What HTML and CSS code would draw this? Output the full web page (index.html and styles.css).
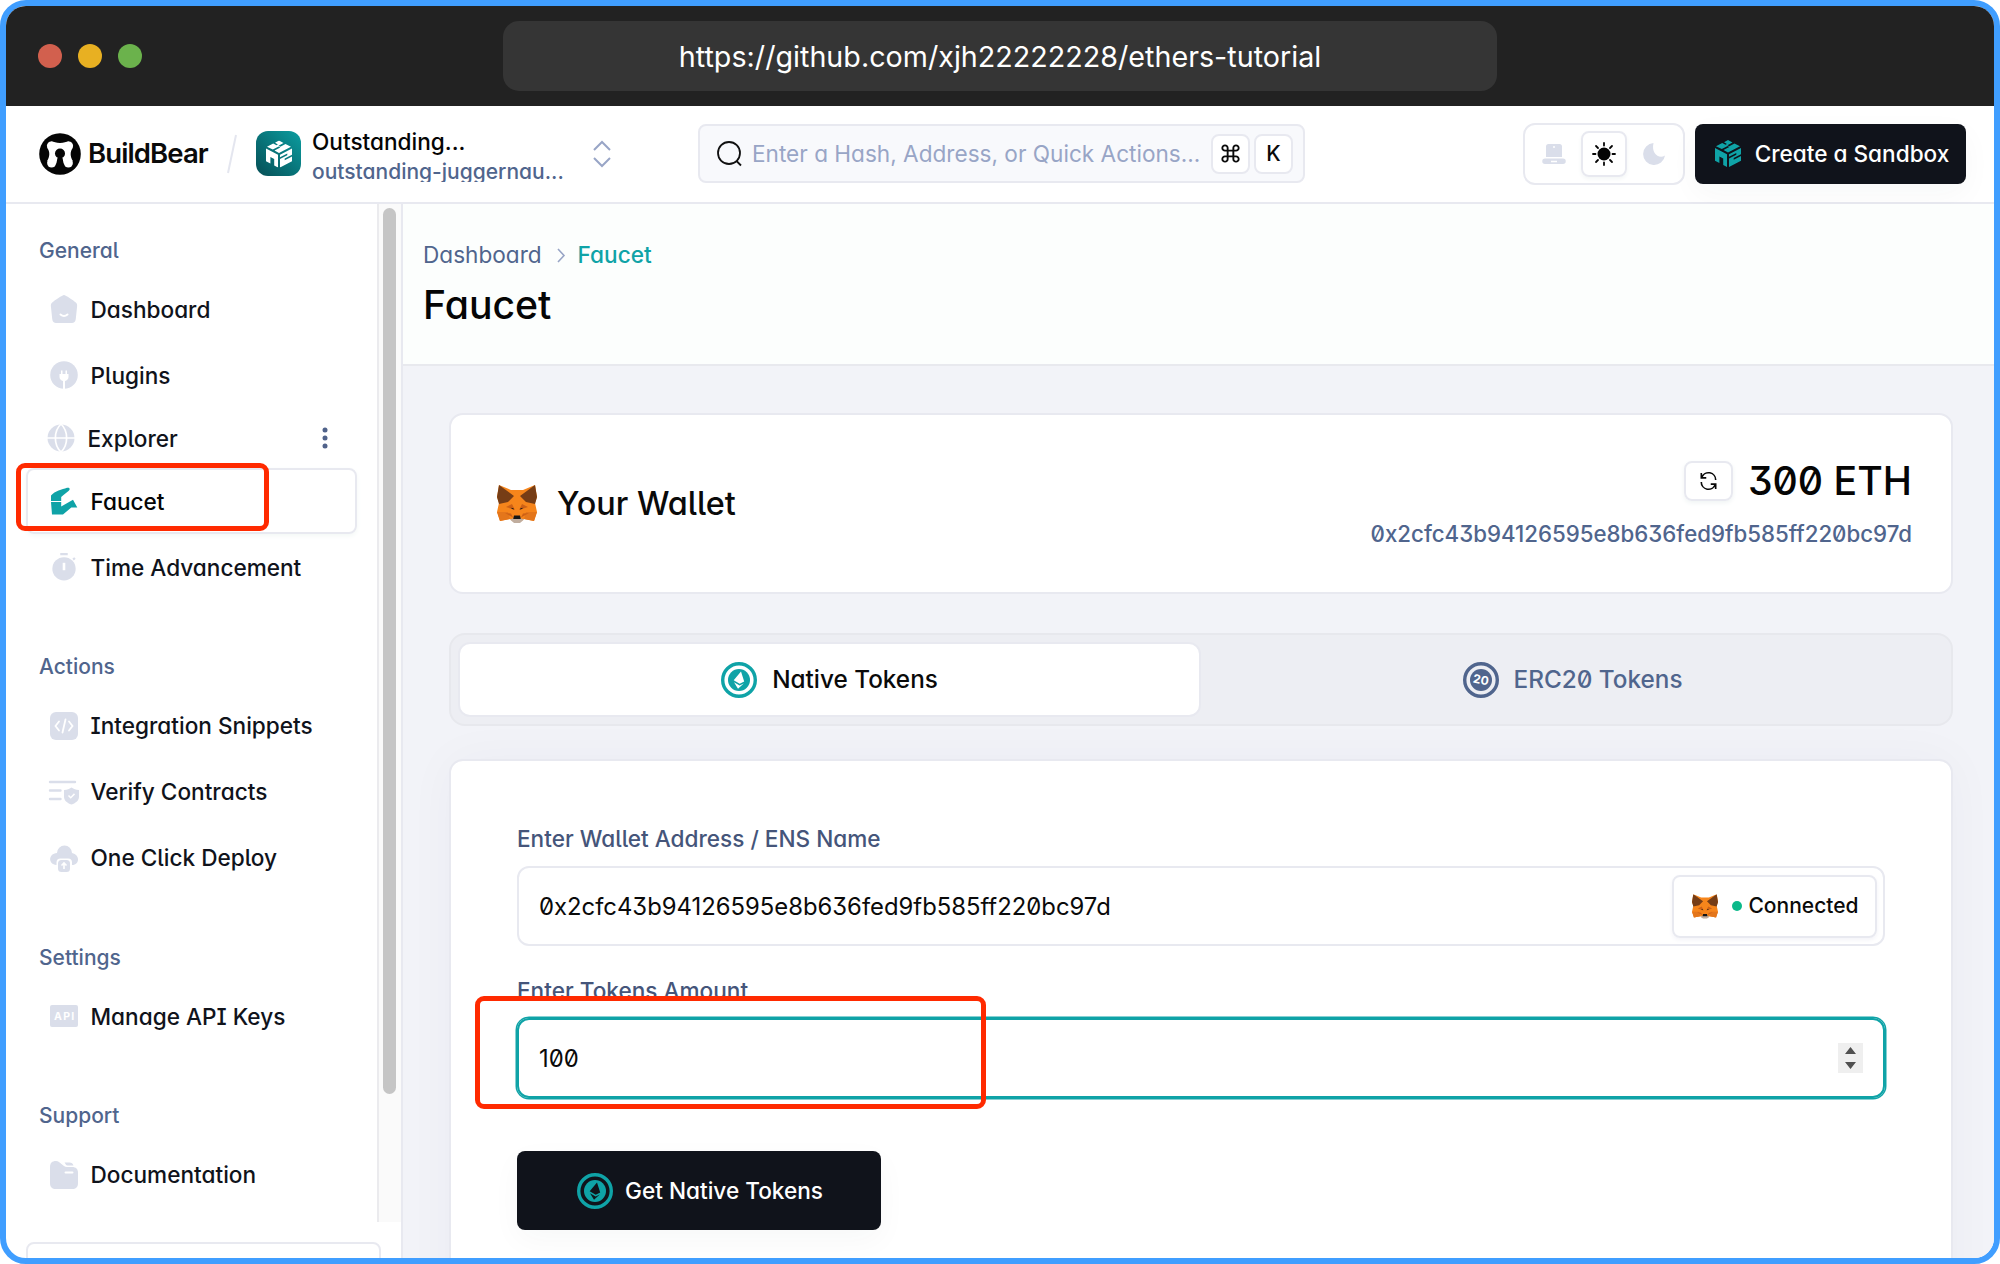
FILE: index.html
```html
<!DOCTYPE html>
<html lang="en">
<head>
<meta charset="utf-8">
<title>Faucet - BuildBear</title>
<link rel="stylesheet" href="styles.css">
</head>
<body>
<svg class="defs" width="0" height="0" aria-hidden="true">
  <symbol id="fox" viewBox="0 0 40 38">
    <path fill="#f6851b" d="M2 0l12 5h12l12-5 2 12-2 6 2 9-3 9-10-2-3 2.500H16L13 34 3 36 0 27l2-9-2-6z"/>
    <path fill="#763d16" d="M2 0l15 11-6 6-9 2L0 12zM38 0L23 11l6 6 9 2 2-7z"/>
    <path fill="#e4761b" d="M0 27h11l2 7-10 2zM40 27H29l-2 7 10 2z"/>
    <path fill="#cd6116" d="M9 22l6-3 3 6zM31 22l-6-3-3 6zM8 28l6 .5 2 4zM32 28l-6 .5-2 4z"/>
    <path fill="#c0ad9e" d="M13 34.500l4-1.500h6l4 1.500-4 3.500h-6z"/>
    <path fill="#161616" d="M17 30.500h6l.8 3.500h-7.600zM13.500 22.800l3 .4.200 1.600zM26.500 22.800l-3 .4-.2 1.600z"/>
  </symbol>
  <symbol id="cube" viewBox="0 0 26 27">
    <path fill="currentColor" d="M13 0l4.500 2.500-5 2.700 1.800 1 5.200-2.700L25 6.200l-12 6.300L8.500 10l5.800-2.900-1.600-1L6.800 9 1 6.200l6.200-3.100 3.300 1.700 1.400-.8L9 2.200z"/>
    <path fill="currentColor" d="M0 8l12 6.300V27l-3.800-2v-6.500l-3.800-2.100v6.500L0 20.700z"/>
    <path fill="currentColor" d="M14 14.300L26 8v6.200l-7.300 3.900v1.700l7.300-3.800v4.700L14 27v-8.400l7.300-3.900V13L14 16.800z"/>
  </symbol>
  <symbol id="coin" viewBox="0 0 36 36">
    <circle cx="18" cy="18" r="16.300" fill="none" stroke="currentColor" stroke-width="3.400"/>
    <circle cx="18" cy="18" r="11" fill="currentColor"/>
    <path class="coin-gem" d="M20 9.500l3.200 10-4.500 2.200-6-3.400zM13 20.300l5.600 3.100 4.200-1.900-5.800 5.200z"/>
  </symbol>
</svg>

<div class="window">
  <div class="titlebar">
    <div class="lights"><i class="red"></i><i class="yellow"></i><i class="green"></i></div>
    <div class="url">https://github.com/xjh22222228/ethers-tutorial</div>
  </div>

  <header class="topbar">
    <svg class="bear" viewBox="0 0 42 42"><circle cx="21" cy="21" r="20.800" fill="#050505"/>
      <g fill="#fff"><circle cx="12.200" cy="12.700" r="4.300"/><circle cx="29.800" cy="12.700" r="4.300"/><circle cx="12.600" cy="30" r="4.500"/><circle cx="29.400" cy="30" r="4.500"/>
      <path d="M12 8.400c3 0 5 1.600 9 1.600s6-1.600 9-1.600l3.600 6.600c-2.600 4-2.600 8 .2 13L25 31c-1-2-1-4.500-1.500-6h-5c-.5 1.500-.5 4-1.500 6l-8.800-3c2.800-5 2.800-9 .2-13z"/></g>
      <circle cx="21" cy="20.500" r="5" fill="#050505"/><path fill="#050505" d="M19 23h4v5l2 6v4h-8v-4l2-6z"/></svg>
    <span class="brand">BuildBear</span>
    <svg class="slash" viewBox="0 0 10 40"><path d="M9 1L1 39" stroke="#e4e6ef" stroke-width="2"/></svg>
    <span class="badge"><svg viewBox="0 0 26 27"><use href="#cube"/></svg></span>
    <div class="project"><div class="project-name">Outstanding...</div><div class="project-id">outstanding-juggernau...</div></div>
    <svg class="updown" viewBox="0 0 18 26" fill="none" stroke="#98a5c6" stroke-width="2"><path d="M1 9l8-8 8 8M1 17l8 8 8-8"/></svg>
    <div class="search">
      <svg class="lens" viewBox="0 0 26 26" fill="none" stroke="#111" stroke-width="1.800"><circle cx="12" cy="12" r="11"/><path d="M19.500 20l4.500 4.500"/></svg>
      <span class="hint">Enter a Hash, Address, or Quick Actions...</span>
      <kbd><svg class="cmd" viewBox="0 0 20 20" fill="none" stroke="#0a0a0a" stroke-width="2"><path d="M7 7h6v6H7zM7 7H4.300A2.800 2.800 0 1 1 7 4.300zM13 7V4.300A2.800 2.800 0 1 1 15.700 7zM13 13h2.700A2.800 2.800 0 1 1 13 15.700zM7 13v2.700A2.800 2.800 0 1 1 4.300 13z"/></svg></kbd>
      <kbd>K</kbd>
    </div>
    <div class="themes">
      <span class="theme"><svg viewBox="0 0 24 24"><path fill="#dadeea" d="M6.500 2h11A2.500 2.500 0 0 1 20 4.500V15H4V4.500A2.500 2.500 0 0 1 6.500 2zM3 16.500h18a2.500 2.500 0 0 1 0 5.500H3a2.500 2.500 0 0 1 0-5.500z"/><circle cx="12" cy="5" r="1" fill="#fff"/><path stroke="#fff" stroke-width="1.600" d="M9 19.500h6"/></svg></span>
      <span class="theme current"><svg viewBox="0 0 24 24"><circle cx="12" cy="12" r="6.500" fill="#050505"/><path stroke="#050505" stroke-width="1.800" stroke-linecap="round" d="M12 1v2.500M12 20.500V23M1 12h2.500M20.500 12H23M4 4l2 2M18 18l2 2M20 4l-2 2M6 18l-2 2"/></svg></span>
      <span class="theme"><svg viewBox="0 0 24 24"><path fill="#dadeea" d="M11.500 1A11 11 0 1 0 23 13.500c-6 4-14-2-11.500-12.500z"/></svg></span>
    </div>
    <button class="dark create"><svg viewBox="0 0 26 27"><use href="#cube"/></svg>Create a Sandbox</button>
  </header>

  <div class="body">
    <aside class="side">
      <nav class="nav">
        <h2>General</h2>
        <a class="item"><svg viewBox="0 0 28 28"><path fill="#dadeea" d="M14 0c1.500 0 9.500 5.500 11.500 7.200 1.800 1.600 1.800 2.600 1.500 5l-1.200 11.500c-.4 3-1.500 4.300-4.800 4.300H7c-3.300 0-4.400-1.300-4.800-4.300L1 12.200c-.3-2.400-.3-3.400 1.500-5C4.500 5.500 12.500 0 14 0z"/><path d="M10.500 19.500c2 1.700 5 1.700 7 0" fill="none" stroke="#fff" stroke-width="2" stroke-linecap="round"/></svg>Dashboard</a>
        <a class="item"><svg viewBox="0 0 28 28"><circle cx="14" cy="14" r="13.800" fill="#dadeea"/><path fill="#fff" d="M11 9.500h1.500V13h3V9.500H17V13h1.500v3c0 2-1.500 3.500-3.500 4v8h-2v-8c-2-.5-3.500-2-3.500-4v-3H11z"/></svg>Plugins</a>
        <a class="item explorer"><svg viewBox="0 0 28 28"><circle cx="14" cy="14" r="13.500" fill="#dadeea"/><path fill="none" stroke="#fff" stroke-width="1.700" d="M0 14h28M14 0c-7.500 7-7.500 21 0 28M14 0c7.500 7 7.500 21 0 28"/></svg>Explorer
          <svg class="more" viewBox="0 0 6 22" fill="#50628a"><circle cx="3" cy="3" r="2.500"/><circle cx="3" cy="11" r="2.500"/><circle cx="3" cy="19" r="2.500"/></svg></a>
        <a class="item active"><svg viewBox="0 0 28 28"><path fill="#0fa3a7" d="M1 8.500C5 4 12 2.500 17 .8c3-.8 3.500 1.800 1.500 3.200L13.500 8l-2.300 2v4H1zM1 15h10.200v4.500L23 12.700l4.300 7.800h-6L13 27.500H2z"/></svg>Faucet<span class="mark mark-nav"></span></a>
        <a class="item"><svg viewBox="0 0 28 30"><path fill="#dadeea" d="M10 0h8v2.500h-8zM23 6l2-1.500 1.500 1.700L24.500 8z"/><circle cx="14" cy="17" r="12.500" fill="#dadeea"/><path stroke="#fff" stroke-width="2.800" d="M14 10.500v8"/></svg>Time Advancement</a>
        <h2>Actions</h2>
        <a class="item"><svg viewBox="0 0 28 28"><rect width="28" height="28" rx="6" fill="#dadeea"/><path fill="none" stroke="#fff" stroke-width="1.800" stroke-linecap="round" d="M9 9.500L5.500 14 9 18.500M19 9.500l3.500 4.500-3.500 4.500M15.500 7.500l-3 13"/></svg>Integration Snippets</a>
        <a class="item"><svg class="wide" viewBox="0 0 30 26"><path fill="none" stroke="#dadeea" stroke-width="2.400" stroke-linecap="round" d="M1 3h25M1 11.500h10.500M1 20h10.500"/><path fill="#dadeea" d="M22.500 8.500c2.500 1.500 4 2.200 7.500 2.500v6.500c0 4-3 6.500-7.500 8-4.500-1.500-7.500-4-7.500-8V11c3.500-.3 5-1 7.500-2.500z"/><path fill="none" stroke="#fff" stroke-width="1.500" d="M19.500 16.500l2.200 2.200 3.800-3.800"/></svg>Verify Contracts</a>
        <a class="item"><svg viewBox="0 0 28 28"><path fill="#dadeea" d="M7 9a7.500 7.500 0 1 1 15 0c8 1.500 8 12 0 12v-2.500a4 4 0 0 0-4-4h-7.500a4 4 0 0 0-4 4V21C-2 20.500-2 9.500 7 9z"/><rect x="8" y="16" width="12" height="12" rx="3.500" fill="#dadeea"/><path fill="none" stroke="#fff" stroke-width="1.600" d="M14 25v-5.500M11.500 21.500L14 19l2.500 2.500"/></svg>One Click Deploy</a>
        <h2>Settings</h2>
        <a class="item"><svg viewBox="0 0 28 28"><rect y="3" width="28" height="22" rx="2" fill="#dadeea"/><text x="14.700" y="18" text-anchor="middle" class="api">API</text></svg>Manage API Keys</a>
        <h2>Support</h2>
        <a class="item"><svg viewBox="0 0 28 28"><path fill="#dadeea" d="M0 6C0 2 2 0 6 0c4.500 0 6.500 6 11 6h5c4 0 6 2 6 6v10c0 4-2 6-6 6H6c-4 0-6-2-6-6zM14.500 1.500h5c2 0 3.500 1 4 3h-6c-1.500 0-2-1.500-3-3z"/><path stroke="#fff" stroke-width="2" stroke-linecap="round" d="M15.500 11.500h7"/></svg>Documentation</a>
      </nav>
      <div class="track"><div class="thumb"></div></div>
      <div class="foot"><div class="account"></div></div>
    </aside>

    <main class="main">
      <div class="heading">
        <div class="crumbs"><span>Dashboard</span><svg viewBox="0 0 8 15" fill="none" stroke="#98a5c6" stroke-width="1.600"><path d="M1 1l6 6.500L1 14"/></svg><span class="here">Faucet</span></div>
        <h1>Faucet</h1>
      </div>
      <div class="content">
        <section class="wallet">
          <svg class="fox" viewBox="0 0 40 38"><use href="#fox"/></svg>
          <h3>Your Wallet</h3>
          <div class="funds">
            <div class="balance"><span class="refresh"><svg viewBox="0 0 18 20" fill="none" stroke="#0a0a0a" stroke-width="1.800"><path d="M1 1v5.500h5.500M1.500 6A8 8 0 0 1 17 9M17 19v-5.500h-5.500M16.500 14A8 8 0 0 1 1 11"/></svg></span>300 ETH</div>
            <div class="address">0x2cfc43b94126595e8b636fed9fb585ff220bc97d</div>
          </div>
        </section>
        <div class="tabs">
          <div class="tab on"><svg viewBox="0 0 36 36"><use href="#coin"/></svg>Native Tokens</div>
          <div class="tab"><svg viewBox="0 0 36 36"><circle cx="18" cy="18" r="16.300" fill="none" stroke="#50658d" stroke-width="3.400"/><circle cx="18" cy="18" r="11" fill="#50658d"/><text x="18" y="22" text-anchor="middle" transform="rotate(10 18 18)" class="twenty">20</text></svg>ERC20 Tokens</div>
        </div>
        <section class="form">
          <label>Enter Wallet Address / ENS Name</label>
          <div class="field"><span class="value">0x2cfc43b94126595e8b636fed9fb585ff220bc97d</span>
            <span class="connected"><svg viewBox="0 0 40 38"><use href="#fox"/></svg><i></i>Connected</span></div>
          <label>Enter Tokens Amount</label>
          <div class="field focus"><span class="value">100</span>
            <svg class="spin" viewBox="0 0 25 30"><path fill="#efefef" d="M0 0h25v30H0z"/><path fill="#505050" d="M7 11l5.500-7 5.500 7zM7 19l5.500 7 5.500-7z"/></svg>
            <span class="mark mark-amount"></span></div>
          <button class="dark get"><svg viewBox="0 0 36 36"><use href="#coin"/></svg>Get Native Tokens</button>
        </section>
      </div>
    </main>
  </div>
</div>
</body>
</html>
```
FILE: styles.css
```css
* { box-sizing: border-box; }
body {
  margin: 0;
  background: #fff;
  color: #0a0a0a;
  font: 500 22.6px/1.2 Inter, sans-serif;
  font-feature-settings: "zero", "cv05", "cv08", "cv09", "cv11";
}
svg { display: block; flex: none; overflow: visible; }
.defs { position: absolute; }
h1, h2, h3 { margin: 0; font-weight: 500; }
button { font: inherit; font-feature-settings: inherit; border: 0; }

.window {
  width: 2000px;
  height: 1264px;
  border: 6px solid #409eff;
  border-radius: 26px;
  overflow: hidden;
  display: flex;
  flex-direction: column;
}

/* browser chrome */
.titlebar {
  height: 100px;
  flex: none;
  background: #222;
  display: grid;
  grid-template-columns: 1fr 994px 1fr;
  align-items: center;
}
.lights { display: flex; gap: 16px; padding-left: 32px; }
.lights i { width: 24px; height: 24px; border-radius: 50%; }
.red { background: #d2604e; }
.yellow { background: #e8b022; }
.green { background: #6bb24c; }
.url {
  height: 70px;
  border-radius: 16px;
  background: #353535;
  color: #fff;
  font: 400 28.7px/71px Inter, sans-serif;
  font-feature-settings: normal;
  text-align: center;
}

/* app header */
.topbar {
  height: 98px;
  flex: none;
  border-bottom: 2px solid #e8e9f0;
  background: #fff;
  display: flex;
  align-items: center;
  padding: 1px 28px 2px 33px;
}
.bear { width: 42px; height: 42px; }
.brand {
  width: 122px;
  margin-left: 7px;
  font-size: 27.5px;
  font-weight: 600;
  letter-spacing: -.9px;
  font-feature-settings: normal;
}
.slash { width: 10px; height: 40px; margin-left: 17px; }
.badge {
  width: 45px;
  height: 45px;
  margin-left: 19px;
  border-radius: 12px;
  background: linear-gradient(45deg, #064e55, #0b9da0);
  color: #fff;
  display: grid;
  place-items: center;
}
.badge svg { width: 26px; height: 28px; }
.project { width: 271px; margin-left: 11px; height: 54px; margin-top: 3px; overflow: hidden; }
.project-name { line-height: 28px; color: #050505; }
.project-id { font-size: 21px; line-height: 31px; color: #50658d; }
.updown { width: 18px; height: 26px; margin-left: 10px; }
.search {
  width: 607px;
  height: 59px;
  margin-left: 87px;
  padding: 0 10px 0 17px;
  border: 2px solid #e8e9f0;
  border-radius: 8px;
  background: #f8f9fc;
  display: flex;
  align-items: center;
  gap: 4px;
}
.lens { width: 26px; height: 26px; }
.hint { flex: 1; margin-left: 5px; color: #98a5c6; font-weight: 400; white-space: nowrap; }
kbd {
  width: 39px;
  height: 40px;
  border: 2px solid #e8e9f0;
  border-radius: 8px;
  background: #fff;
  font: inherit;
  font-size: 21px;
  display: grid;
  place-items: center;
}
.cmd { width: 19px; height: 19px; }
.themes {
  width: 162px;
  height: 62px;
  margin-left: auto;
  padding: 6px;
  border: 2px solid #e8e9f0;
  border-radius: 12px;
  display: flex;
  align-items: center;
  gap: 4px;
}
.theme { width: 46px; height: 46px; border: 2px solid transparent; border-radius: 8px; display: grid; place-items: center; }
.theme svg { width: 24px; height: 24px; }
.theme.current { border-color: #e8e9f0; box-shadow: 0 2px 4px #f3f6f6; }
.dark {
  background: #10131b;
  color: #fff;
  border-radius: 8px;
  padding: 0;
  display: flex;
  align-items: center;
  justify-content: center;
  box-shadow: 0 10px 30px rgba(30, 60, 50, .035);
}
.dark svg { color: #0fa3a7; }
.create { width: 271px; height: 60px; margin-left: 10px; padding-left: 3px; gap: 14px; }
.create svg { width: 26px; height: 27px; }

.body { flex: 1; display: flex; min-height: 0; }

/* sidebar */
.side {
  width: 397px;
  flex: none;
  border-right: 2px solid #e8e9f0;
  display: grid;
  grid-template-columns: 371px 24px;
  grid-template-rows: 1018px 1fr;
}
.nav { padding: 30px 20px 0; color: #10131b; }
.nav h2 {
  height: 32px;
  margin: 50px 0 10.4px 13px;
  font-size: 21px;
  line-height: 33px;
  color: #50658d;
}
.nav h2:first-child { margin-top: 0; }
.item {
  position: relative;
  height: 66px;
  width: 331px;
  padding-left: 22px;
  border: 2px solid transparent;
  border-radius: 8px;
  display: flex;
  align-items: center;
  gap: 12.500px;
  white-space: nowrap;
}
.item svg { width: 28px; height: 28px; }
.item svg.wide { width: 30px; height: 26px; margin: 0 -1px; }
.item.explorer { height: 60px; padding-left: 19px; }
.item svg.more { width: 6px; height: 22px; margin-left: auto; margin-right: 27px; }
.item.active { border-color: #e8e9f0; box-shadow: 0 2px 5px #f3f8f6; color: #050505; }
.api { font: 700 10.500px Inter, sans-serif; letter-spacing: 1.200px; fill: #fff; }
.track { background: #fafafa; border-left: 2px solid #ebebee; padding: 4px 0 0 4px; }
.thumb { width: 13px; height: 886px; border-radius: 7px; background: #c5c5c5; }
.foot { grid-column: 1 / 3; padding: 20px 20px 0; overflow: hidden; }
.account { height: 60px; border: 2px solid #e8e9f0; border-radius: 8px; }

/* annotation outlines laid over the page */
.mark { position: absolute; border: 5px solid #ff2a00; border-radius: 9px; z-index: 2; }
.mark-nav { left: -12px; top: -7px; width: 253px; height: 68px; }
.mark-amount { left: -44px; top: -24px; width: 511px; height: 113px; }

/* main column */
.main { flex: 1; display: flex; flex-direction: column; background: #f2f3f8; min-width: 0; }
.heading { height: 162px; flex: none; background: #fcfefd; border-bottom: 2px solid #e8e9ee; padding: 37px 20px 0; }
.crumbs { display: flex; align-items: center; height: 28px; color: #50658d; font-weight: 400; }
.crumbs svg { width: 8px; height: 15px; margin: 0 13px 0 15px; }
.here { color: #0fa3a7; font-weight: 500; }
h1 { font-size: 39.2px; line-height: 48px; margin-top: 12px; color: #050505; }
.content { flex: 1; padding: 47px 41px 0 46px; }
.wallet, .form { background: #fff; border: 2px solid #e8e9f0; border-radius: 14px; }
.wallet { height: 181px; display: flex; align-items: center; padding: 0 39px 0 46px; }
.fox { width: 40px; height: 38px; }
h3 { font-size: 32.4px; margin-left: 20px; margin-top: 1px; color: #0a0a0a; }
.funds { margin-left: auto; text-align: right; margin-top: -2px; }
.balance { display: flex; justify-content: flex-end; align-items: center; font-size: 39.2px; line-height: 50px; color: #050505; }
.refresh {
  width: 49px;
  height: 40px;
  margin-right: 15px;
  border: 2px solid #e8e9f0;
  border-radius: 8px;
  box-shadow: 0 2px 5px #f0f4f4;
  display: grid;
  place-items: center;
}
.refresh svg { width: 17px; height: 18px; }
.address { font-size: 22.25px; line-height: 30px; margin-top: 13px; color: #50658d; }
.tabs {
  height: 93px;
  margin-top: 39px;
  padding: 7px;
  border: 2px solid #e7e8ed;
  border-radius: 16px;
  background: #edeef3;
  display: grid;
  grid-template-columns: 1fr 1fr;
}
.tab {
  display: flex;
  align-items: center;
  justify-content: center;
  gap: 15px;
  font-size: 24.3px;
  color: #50658d;
  border: 2px solid transparent;
  border-radius: 12px;
}
.tab svg { width: 36px; height: 36px; }
.tab.on { background: #fff; border-color: #e8e9f0; color: #0a0a0a; }
.tab.on svg { color: #0fa3a7; }
.coin-gem { fill: var(--gem, #fff); }
.get { --gem: #10131b; }
.twenty { font: 700 12px Inter, sans-serif; fill: #fff; }
.form { height: 560px; margin-top: 33px; padding: 60px 66px; box-shadow: 0 0 50px rgba(30, 40, 80, .035); }
label { display: block; height: 32px; line-height: 35px; color: #45557a; }
.field {
  position: relative;
  height: 80px;
  margin: 13px 0 27px;
  padding: 0 6px 0 20px;
  border: 2px solid #e8e9f0;
  border-radius: 12px;
  display: flex;
  align-items: center;
  justify-content: space-between;
  font-size: 23.85px;
  font-weight: 400;
}
.value { padding-top: 2px; }
.focus { border-color: #0fa3a7; box-shadow: 0 0 0 1.500px #0fa3a7; padding-right: 20px; }
.connected {
  width: 205px;
  height: 63px;
  border: 2px solid #e8e9f0;
  border-radius: 8px;
  display: flex;
  align-items: center;
  justify-content: center;
  padding-left: 2px;
  font-size: 21px;
  font-weight: 500;
  color: #0a0a0a;
  box-shadow: 0 2px 4px #f3f3f8;
}
.connected svg { width: 26px; height: 25px; }
.connected i { width: 10px; height: 10px; border-radius: 50%; background: #0bb98a; margin: 0 6px 0 14px; }
.spin { width: 25px; height: 30px; }
.get { width: 364px; height: 79px; margin-top: 53px; padding: 1px 0 0 2px; gap: 12px; }
.get svg { width: 36px; height: 36px; }
```
